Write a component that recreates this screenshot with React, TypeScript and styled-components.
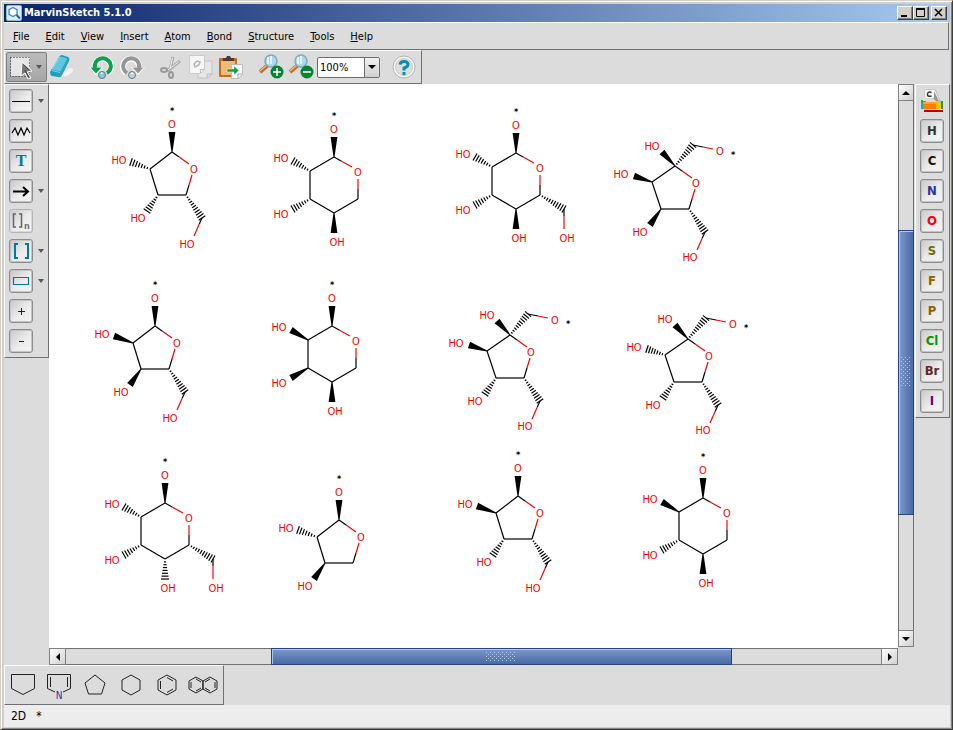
import React from "react";
import styled, { createGlobalStyle } from "styled-components";

const FONT = `"DejaVu Sans Condensed", "DejaVu Sans", "Liberation Sans", sans-serif`;

const GlobalStyle = createGlobalStyle`
  * { box-sizing: border-box; }
  body { margin: 0; background: #d4d0c8; }
  button { font: inherit; color: inherit; margin: 0; padding: 0; border: 0; background: none; }
  svg { display: block; }
`;

const Window = styled.div`
  display: flex;
  flex-direction: column;
  height: 100vh;
  padding: 3px 2px 2px 3px;
  background: #d4d0c8;
  border: 1px solid;
  border-color: #d4d0c8 #404040 #404040 #d4d0c8;
  box-shadow: inset 1px 1px #fff, inset -1px -1px #808080;
  font-family: ${FONT};
  font-size: 11px;
  color: #000;
`;

const TitleBar = styled.header`
  display: flex;
  align-items: center;
  height: 18px;
  flex: none;
  padding: 0 3px 0 2px;
  background: linear-gradient(90deg, #0a246a, #a6caf0);
`;

const Title = styled.h1`
  flex: 1;
  margin: 0 2px;
  font-size: 11px;
  font-weight: bold;
  line-height: 18px;
  color: #fff;
`;

const WindowButton = styled.button<{ $apart?: boolean }>`
  display: grid;
  place-items: center;
  width: 16px;
  height: 14px;
  margin-left: ${(p) => (p.$apart ? 2 : 0)}px;
  background: #d4d0c8;
  border: 1px solid;
  border-color: #fff #404040 #404040 #fff;
  box-shadow: inset -1px -1px #808080;
`;

const Body = styled.div`
  display: flex;
  flex-direction: column;
  flex: 1;
  min-height: 0;
  background: #dcdcdc;
`;

const MenuBar = styled.nav`
  display: flex;
  align-items: center;
  gap: 16px;
  height: 28px;
  flex: none;
  padding: 1px 8px 0;
  margin-right: 1px;
  border: 1px solid;
  border-color: #fff #707070 #707070 #dcdcdc;
`;

const MenuItem = styled.button`
  line-height: 16px;
  &::first-letter { text-decoration: underline; }
`;

const Panel = styled.div`
  border: 1px solid;
  border-color: #fff #707070 #707070 #fff;
  background: #dcdcdc;
`;

const MainTools = styled(Panel)`
  display: flex;
  align-items: center;
  align-self: flex-start;
  flex: none;
  height: 34px;
  padding: 0 2px 0 1px;
`;

const ToolButton = styled.button<{ $gap?: number }>`
  width: 30px;
  height: 30px;
  display: grid;
  place-items: center;
  margin-left: ${(p) => p.$gap ?? 0}px;
`;

const SelectTool = styled.button`
  display: flex;
  align-items: center;
  gap: 3px;
  width: 41px;
  height: 30px;
  padding-left: 2px;
  border: 1px solid #808080;
  border-radius: 2px;
  background: linear-gradient(#bcbcbc, #a6a6a6);
`;

const ZoomBox = styled.div`
  position: relative;
  width: 63px;
  height: 21px;
  margin: 0 9px 0 1px;
`;

const ZoomSelect = styled.select`
  appearance: none;
  width: 100%;
  height: 100%;
  margin: 0;
  padding: 0 2px;
  border: 1px solid #6e6e6e;
  border-radius: 2px;
  background: #fff;
  font: inherit;
  color: #000;
`;

const ZoomArrow = styled.span`
  position: absolute;
  top: 1px;
  right: 1px;
  bottom: 1px;
  width: 15px;
  display: grid;
  place-items: center;
  border-left: 1px solid #6e6e6e;
  background: linear-gradient(#f2f2f2, #d0d0d0);
  pointer-events: none;
`;

const Workspace = styled.div`
  display: flex;
  align-items: stretch;
  flex: 1;
  min-height: 0;
`;

const SideColumn = styled.aside<{ $width: number }>`
  width: ${(p) => p.$width}px;
  flex: none;
`;

const SidePanel = styled(Panel)`
  display: flex;
  flex-direction: column;
  gap: 6px;
  padding: 4px 0 4px 4px;
`;

const SideRow = styled.div`
  display: flex;
  align-items: center;
  gap: 5px;
  height: 24px;
`;

const Key = styled.button<{ $color?: string; $faded?: boolean }>`
  display: grid;
  place-items: center;
  width: 24px;
  height: 24px;
  border: 1px solid ${(p) => (p.$faded ? "#b4b4b4" : "#8c8c8c")};
  border-radius: 3px;
  background: linear-gradient(135deg, #c8c8c8, #ececec 55%, #f4f4f4);
  box-shadow: inset 0 0 0 1px ${(p) => (p.$faded ? "#dadada" : "#c4c4c4")};
  color: ${(p) => p.$color ?? "#000"};
  font-size: 13px;
  font-weight: bold;
  line-height: 16px;
`;

const Viewport = styled.main`
  display: grid;
  grid-template: minmax(0, 1fr) 17px / minmax(0, 1fr) 17px;
  flex: 1;
  min-width: 0;
`;

const Canvas = styled.div`
  background: #fff;
  overflow: hidden;
`;

const ScrollBar = styled.div<{ $vertical?: boolean }>`
  display: flex;
  flex-direction: ${(p) => (p.$vertical ? "column" : "row")};
  margin: ${(p) => (p.$vertical ? "0 1px 1px 0" : "0")};
  border: 1px solid #707070;
  background: #dcdcdc;
`;

const ScrollButton = styled.button<{ $vertical?: boolean }>`
  display: grid;
  place-items: center;
  flex: none;
  width: ${(p) => (p.$vertical ? "auto" : "15px")};
  height: ${(p) => (p.$vertical ? "15px" : "auto")};
  background: linear-gradient(135deg, #fff, #d0d0d0);
  box-shadow: 0 0 0 1px #808080;
`;

const Gap = styled.div<{ $share: number }>`
  flex: ${(p) => p.$share} 1 0;
`;

const Thumb = styled.div<{ $vertical?: boolean; $share: number }>`
  display: grid;
  place-items: center;
  flex: ${(p) => p.$share} 1 0;
  margin: ${(p) => (p.$vertical ? "0 -1px" : "-1px 0")};
  border: 1px solid #2a4480;
  box-shadow: inset 1px 1px #a6caf0;
  background: linear-gradient(${(p) => (p.$vertical ? "90deg" : "180deg")}, #7b98cc, #4a6aa5);
`;

const Grip = styled.span<{ $vertical?: boolean }>`
  width: ${(p) => (p.$vertical ? 10 : 30)}px;
  height: ${(p) => (p.$vertical ? 30 : 10)}px;
  background:
    linear-gradient(#a6c4ee, #a6c4ee) 0 0 / 1px 1px,
    conic-gradient(#a6c4ee 0 0) 0 0 / 1px 1px;
  background:
    conic-gradient(from 270deg at 1px 1px, #b0caf0 90deg, transparent 0) 0 0 / 4px 4px,
    conic-gradient(from 270deg at 1px 1px, #b0caf0 90deg, transparent 0) 2px 2px / 4px 4px;
`;

const RingTools = styled(Panel)`
  display: flex;
  align-items: center;
  align-self: flex-start;
  gap: 4px;
  flex: none;
  height: 40px;
  padding: 0 4px 0 2px;
`;

const RingButton = styled.button`
  width: 32px;
  height: 32px;
`;

const StatusBar = styled.footer`
  display: flex;
  align-items: center;
  gap: 10px;
  height: 22px;
  flex: none;
  padding: 0 7px;
  background: #ededed;
  font-size: 12px;
`;

/* ---------- molecules ---------- */

type Pt = [number, number];
type Stereo = "wedge" | "hash";
interface Sugar {
  kind: "furanose" | "pyranose" | "ketose";
  at: Pt;
  s2: Stereo;
  s3: Stereo;
  s4?: Stereo;
  tail?: boolean;
}

const SUGARS: Sugar[] = [
  { kind: "furanose", at: [123, 68], s2: "hash", s3: "hash", tail: true },
  { kind: "pyranose", at: [285, 73], s2: "hash", s3: "hash", s4: "wedge" },
  { kind: "pyranose", at: [467, 69], s2: "hash", s3: "hash", s4: "wedge", tail: true },
  { kind: "ketose", at: [626, 82], s2: "wedge", s3: "wedge", tail: true },
  { kind: "furanose", at: [106, 242], s2: "wedge", s3: "wedge", tail: true },
  { kind: "pyranose", at: [283, 242], s2: "wedge", s3: "wedge", s4: "wedge" },
  { kind: "ketose", at: [461, 251], s2: "wedge", s3: "hash", tail: true },
  { kind: "ketose", at: [639, 255], s2: "hash", s3: "hash", tail: true },
  { kind: "pyranose", at: [116, 419], s2: "hash", s3: "hash", s4: "hash", tail: true },
  { kind: "furanose", at: [290, 436], s2: "hash", s3: "wedge" },
  { kind: "furanose", at: [469, 412], s2: "wedge", s3: "hash", tail: true },
  { kind: "pyranose", at: [654, 414], s2: "wedge", s3: "hash", s4: "wedge" },
];

const RED = "#f00";

const Bond = ({ a, b, color = "#000" }: { a: Pt; b: Pt; color?: string }) => (
  <line x1={a[0]} y1={a[1]} x2={b[0]} y2={b[1]} stroke={color} strokeWidth="1.200" />
);

const HalfBond = ({ a, b, split = 0.5 }: { a: Pt; b: Pt; split?: number }) => {
  const m: Pt = [a[0] + (b[0] - a[0]) * split, a[1] + (b[1] - a[1]) * split];
  return (
    <>
      <Bond a={a} b={m} />
      <Bond a={m} b={b} color={RED} />
    </>
  );
};

const StereoBond = ({ a, b, type }: { a: Pt; b: Pt; type: Stereo }) => {
  const dx = b[0] - a[0];
  const dy = b[1] - a[1];
  const len = Math.hypot(dx, dy);
  const nx = -dy / len;
  const ny = dx / len;
  if (type === "wedge") {
    const tip = 0.5;
    const w = 3.4;
    const corners: Pt[] = [
      [a[0] + nx * tip, a[1] + ny * tip],
      [b[0] + nx * w, b[1] + ny * w],
      [b[0] - nx * w, b[1] - ny * w],
      [a[0] - nx * tip, a[1] - ny * tip],
    ];
    return <polygon points={corners.map((c) => c.join(",")).join(" ")} />;
  }
  const count = Math.round(len / 2.8);
  return (
    <>
      {Array.from({ length: count }, (_, i) => {
        const t = (i + 1) / count;
        const w = 0.6 + 3.4 * t;
        const x = a[0] + dx * t;
        const y = a[1] + dy * t;
        return <Bond key={i} a={[x - nx * w, y - ny * w]} b={[x + nx * w, y + ny * w]} />;
      })}
    </>
  );
};

const Atom = ({ at, children }: { at: Pt; children: string }) => (
  <text x={at[0]} y={at[1] + 4} fill={RED} textAnchor="middle">
    {children}
  </text>
);

const StarText = styled.text`
  font: bold 9px ${FONT};
`;

const Star = ({ at }: { at: Pt }) => (
  <StarText x={at[0]} y={at[1] + 5} textAnchor="middle">
    *
  </StarText>
);

const Molecule = ({ kind, at, s2, s3, s4, tail }: Sugar) => {
  const c1: Pt = [0, 0];
  const six = kind === "pyranose";
  const ketose = kind === "ketose";
  const c2: Pt = six ? [-24, 14] : ketose ? [-23, 16] : [-22, 17];
  const c3: Pt = six ? [-24, 42] : [-14, 43];
  const c4: Pt = six ? [0, 56] : [14, 43];
  return (
    <g transform={`translate(${at[0]} ${at[1]})`}>
      <Bond a={c1} b={c2} />
      <Bond a={c2} b={c3} />
      <Bond a={c3} b={c4} />
      <HalfBond a={c1} b={six ? [18, 10] : [17, 12]} split={0.42} />
      {ketose ? (
        <>
          <StereoBond a={c1} b={[-13, -14]} type="wedge" />
          <Atom at={[-23, -20]}>HO</Atom>
          <StereoBond a={c1} b={[18, -21]} type="hash" />
          <HalfBond a={[18, -21]} b={[38, -17]} />
          <Atom at={[45, -15]}>O</Atom>
          <Star at={[58, -13]} />
        </>
      ) : (
        <>
          <StereoBond a={c1} b={[0, -20]} type="wedge" />
          <Atom at={[0, -28]}>O</Atom>
          <Star at={[0, -43]} />
        </>
      )}
      {six ? (
        <>
          <Bond a={c4} b={[24, 42]} />
          <HalfBond a={[24, 42]} b={[24, 22]} />
          <Atom at={[24, 15]}>O</Atom>
          <StereoBond a={c2} b={[-41, 4]} type={s2} />
          <Atom at={[-53, 1]}>HO</Atom>
          <StereoBond a={c3} b={[-41, 52]} type={s3} />
          <Atom at={[-53, 57]}>HO</Atom>
          {s4 && <StereoBond a={c4} b={[0, 76]} type={s4} />}
          <Atom at={[3, 85]}>OH</Atom>
          {tail && (
            <>
              <StereoBond a={[24, 42]} b={[48, 56]} type="hash" />
              <HalfBond a={[48, 56]} b={[48, 76]} split={0.35} />
              <Atom at={[51, 85]}>OH</Atom>
            </>
          )}
        </>
      ) : (
        <>
          <HalfBond a={c4} b={[20, 23]} />
          <Atom at={ketose ? [21, 17] : [22, 17]}>O</Atom>
          <StereoBond a={c2} b={[-41, 10]} type={s2} />
          <Atom at={ketose ? [-54, 8] : [-53, 8]}>HO</Atom>
          <StereoBond a={c3} b={[-25, 59]} type={s3} />
          <Atom at={ketose ? [-35, 66] : [-34, 66]}>HO</Atom>
          {tail && (
            <>
              <StereoBond a={c4} b={[30, 66]} type="hash" />
              <HalfBond a={[30, 66]} b={[22, 84]} split={0.35} />
              <Atom at={ketose ? [15, 91] : [15, 92]}>HO</Atom>
            </>
          )}
        </>
      )}
    </g>
  );
};

/* ---------- icons ---------- */

const Icon = ({ size = 24, children }: { size?: number; children: React.ReactNode }) => (
  <svg width={size} height={size} viewBox={`0 0 ${size} ${size}`} fill="none" aria-hidden="true">
    {children}
  </svg>
);

const Triangle = ({ d, color = "#000", w = 9, h = 5 }: { d: string; color?: string; w?: number; h?: number }) => (
  <svg width={w} height={h} viewBox={`0 0 ${w} ${h}`} fill={color} aria-hidden="true">
    <path d={d} />
  </svg>
);

const DropMark = () => <Triangle d="M0 0h6l-3 4z" color="#4a5a68" w={6} h={4} />;

const AppIcon = () => (
  <Icon size={16}>
    <rect width="16" height="16" rx="2" fill="#8fbdd2" />
    <rect x="1" y="1" width="14" height="14" rx="1" fill="#d8ecf4" />
    <path d="M7 2.500l4 2.200v4.600l-4 2.200-4-2.200V4.700z" fill="#fff" stroke="#4a88a8" strokeWidth="1.300" />
    <path d="M10.500 10l3.500 3.500" stroke="#2d6484" strokeWidth="2" />
  </Icon>
);

const PointerIcon = () => (
  <Icon>
    <path d="M2 2h19v13l-6-6v10l-2 2H2z" fill="#e6e6e6" />
    <rect x="1.500" y="2.500" width="19" height="19" stroke="#222" strokeDasharray="1 2" />
    <path d="M13 7l10 9-5 1 4 6-3 1-3-6-4 3z" fill="#777" stroke="#fff" />
    <path d="M14.500 9.500l5 5M16 15l3.500 7" stroke="#444" />
  </Icon>
);

const EraserIcon = () => (
  <Icon size={26}>
    <path d="M11 23l9-9q5 0 4 3-3 5-11 6z" fill="#f2f2f2" />
    <path d="M10 3q1-2 3-2l6 2q2 1 1 4l-7 14q-1 3-4 2l-6-1q-2-1-2-4z" fill="#1f9dbf" />
    <path d="M11.500 2.500l7 2-6.500 13-9-2z" fill="#62c6de" />
    <path d="M18.500 4.500l-7 13-1.500 5q2 0 3-2l6.500-13z" fill="#2aa5c6" />
    <path d="M11 3L3 15" stroke="#a6e2ef" />
    <path d="M3 16.500l8 2" stroke="#8bd6e8" />
  </Icon>
);

const TurnIcon = ({ color, ball, flip }: { color: string; ball: string; flip?: boolean }) => (
  <Icon size={26}>
    <g transform={flip ? "matrix(-1 0 0 1 26 0)" : undefined}>
      <path d="M6 12a8 8 0 1 1 13 7" stroke="#fff" strokeWidth="6" />
      <path d="M0 13h14l-7 8z" fill="#fff" />
      <path d="M6 14a8 8 0 1 1 12 5" stroke={color} strokeWidth="4" />
      <path d="M1.500 13.500h11l-5.500 6z" fill={color} />
      <circle cx="13" cy="21" r="3.500" fill={ball} stroke="#5d7c88" />
      <path d="M12 19.500l1.500-.5" stroke="#fff" strokeWidth="1.500" />
    </g>
  </Icon>
);

const CutIcon = () => (
  <Icon>
    <path d="M14 2l-3 13M21 6L8 16" stroke="#aaa" strokeWidth="3" />
    <path d="M13.500 3l-2.500 11M20 6.500L9 15" stroke="#efefef" />
    <ellipse cx="5" cy="15" rx="3" ry="2" stroke="#999" strokeWidth="2" />
    <ellipse cx="12" cy="20" rx="2" ry="3" stroke="#999" strokeWidth="2" />
  </Icon>
);

const CopyIcon = () => (
  <Icon>
    <path d="M9 6h14v13l-5 4H9z" fill="#e6e6e6" stroke="#c4c4c4" />
    <path d="M.5.5h15v14l-4 4H.5z" fill="#f6f6f6" stroke="#ccc" />
    <path d="M5 9l3-3 3 1-1 3-4 2z" stroke="#b4b4b4" strokeWidth="1.500" />
    <path d="M11.500 18v-3.500h4M18 23v-4h5" stroke="#bdbdbd" />
  </Icon>
);

const PasteIcon = () => (
  <Icon>
    <rect x="0" y="3" width="18" height="19" rx="1" fill="#bd6d25" />
    <rect x="2" y="6" width="14" height="14" fill="#f1ba75" />
    <path d="M4 3h3l1-2h3l1 2h3v3H4z" fill="#4a3a30" />
    <path d="M12.500 9.500h11v10l-4 4h-7z" fill="#fafafa" stroke="#bbb" />
    <path d="M19 23v-4h4" stroke="#aaa" />
    <path d="M8 14h7v-3l5 4.500-5 4.500v-3H8z" fill="#08a542" stroke="#fff" strokeWidth=".5" />
  </Icon>
);

const LensIcon = ({ plus }: { plus?: boolean }) => (
  <Icon size={26}>
    <path d="M2 18l8-7" stroke="#b66c2c" strokeWidth="4" />
    <path d="M2 17l7-6" stroke="#f0b878" strokeWidth="1.500" />
    <circle cx="13" cy="7" r="6" fill="#a4dced" stroke="#8ba7b2" strokeWidth="1.500" />
    <path d="M10 3v7M13 2v8" stroke="#e2f7fc" strokeWidth="2" />
    <circle cx="19" cy="18" r="6.500" fill="#078338" />
    <path d={plus ? "M15 18h8M19 14v8" : "M15 18h8"} stroke="#fff" strokeWidth="1.500" />
  </Icon>
);

const HelpIcon = () => (
  <Icon>
    <circle cx="12" cy="12" r="11" fill="#f6f6f6" stroke="#b4b4b4" />
    <circle cx="12" cy="12" r="8.500" fill="#dedede" stroke="#ccc" />
    <path d="M8 9.500Q8.500 6.500 12 6.500t4 2.500-4 4v2.500" stroke="#078eb2" strokeWidth="3" />
    <rect x="10.500" y="17" width="3" height="3" fill="#078eb2" />
  </Icon>
);

const TableIcon = () => (
  <Icon>
    <rect x="1" y="12" width="5" height="8" fill="#18a8d8" />
    <rect x="1" y="11" width="2" height="3" fill="#10b050" />
    <rect x="3" y="13" width="13" height="7" fill="#ff7c00" />
    <rect x="3" y="13" width="13" height="2" fill="#ffa030" />
    <rect x="16" y="12" width="5" height="8" fill="#f4c400" />
    <rect x="21" y="12" width="2" height="8" fill="#00a850" />
    <rect x="4" y="21" width="19" height="2" fill="#c00000" />
    <path d="M5 1l10-1 5 12-3 1-3-4-9-1z" fill="#f5f5f5" stroke="#aaa" strokeWidth=".7" />
    <path d="M14 2l5 10-3 0-4-4z" fill="#999" />
    <path d="M5 1h9v8H5z" fill="#f7f7f7" />
    <path d="M11.500 3.500Q8 2 7.500 5t4 2" stroke="#333" strokeWidth="1.500" />
  </Icon>
);

const toolIcons = {
  bond: <path d="M2 11.500h18" stroke="#000" />,
  chain: <path d="M2 13l3-5 3 7 3-7 3 7 3-7 3 5" stroke="#000" strokeWidth="1.200" />,
  arrow: <path d="M3 11.500h15M13 7l5 4.500-5 4.500" stroke="#000" strokeWidth="2" />,
  brackets: <path d="M8 4H5v14h3M15 4h3v14h-3" stroke="#00799a" strokeWidth="2" />,
  rect: <path d="M3.500 7.500h15v7h-15z" stroke="#00799a" strokeWidth="1.200" />,
  plus: <path d="M8 11.500h7M11.500 8v7" stroke="#222" />,
  minus: <path d="M9 11.500h5" stroke="#222" />,
};

const LetterText = styled.text`
  font: bold 16px "Liberation Serif", serif;
`;

const SmallText = styled.text`
  font: bold 9px ${FONT};
`;

const NitrogenText = styled.text`
  font: 10px ${FONT};
`;

const SIDE_TOOLS: { name: string; drawing: React.ReactNode; drop?: boolean; faded?: boolean }[] = [
  { name: "Bond", drawing: toolIcons.bond, drop: true },
  { name: "Chain", drawing: toolIcons.chain },
  {
    name: "Text",
    drawing: <LetterText x="11" y="16" textAnchor="middle" fill="#00799a">T</LetterText>,
  },
  { name: "Arrow", drawing: toolIcons.arrow, drop: true },
  {
    name: "Repeating group",
    faded: true,
    drawing: (
      <>
        <path d="M6 4H3.500v13H6M9 4h2.500v13H9" stroke="#666" strokeWidth="1.500" />
        <SmallText x="14" y="19" fill="#777">n</SmallText>
      </>
    ),
  },
  { name: "Brackets", drawing: toolIcons.brackets, drop: true },
  { name: "Rectangle", drawing: toolIcons.rect, drop: true },
  { name: "Increase charge", drawing: toolIcons.plus },
  { name: "Decrease charge", drawing: toolIcons.minus },
];

const ELEMENTS: [string, string][] = [
  ["H", "#333"], ["C", "#111"], ["N", "#30309a"], ["O", "#f00"], ["S", "#6b6b00"],
  ["F", "#966000"], ["P", "#966000"], ["Cl", "#009a00"], ["Br", "#5c2a2a"], ["I", "#600090"],
];

const hexagon = (x: number, r: number) => {
  const w = Math.round(r * 0.87);
  const h = r / 2;
  return `M${x} ${16 - r}l${w} ${h}v${r}l${-w} ${h}l${-w} ${-h}v${-r}z`;
};

const RINGS: { name: string; drawing: React.ReactNode }[] = [
  { name: "Cyclopentane, flat", drawing: <path d="M4.500 5.500h23v14L16 25.500l-11.500-6z" /> },
  {
    name: "Pyrrole",
    drawing: (
      <>
        <path d="M12 23l-7.500-3.500v-14h23v14L20 23M7.500 8v10M24.500 8v10" />
        <NitrogenText x="16" y="30" textAnchor="middle" fill="#2c2caa" stroke="none">N</NitrogenText>
      </>
    ),
  },
  { name: "Cyclopentane", drawing: <path d="M16 6l10 8-3.500 11h-13L6 14z" /> },
  { name: "Cyclohexane", drawing: <path d={hexagon(16, 10)} /> },
  {
    name: "Benzene",
    drawing: <path d={`${hexagon(16, 10)}M9.500 12v8M16 8.500l6 3.500M16 23.500l6-3.500`} />,
  },
  {
    name: "Naphthalene",
    drawing: (
      <path d={`${hexagon(9, 8)}${hexagon(23, 8)}M4 13v6M9 10l5 3M9 22l5-3M28 13v6M23 10l-5 3M23 22l-5-3`} />
    ),
  },
];

const MENUS = ["File", "Edit", "View", "Insert", "Atom", "Bond", "Structure", "Tools", "Help"];

export default function App() {
  return (
    <Window>
      <GlobalStyle />
      <TitleBar>
        <AppIcon />
        <Title>MarvinSketch 5.1.0</Title>
        <WindowButton aria-label="Minimize">
          <Icon size={10}><path d="M1 8h6" stroke="#000" strokeWidth="2" /></Icon>
        </WindowButton>
        <WindowButton aria-label="Maximize">
          <Icon size={10}><path d="M.5 1v7.500h8V1" stroke="#000" /><path d="M0 1h9" stroke="#000" strokeWidth="2" /></Icon>
        </WindowButton>
        <WindowButton aria-label="Close" $apart>
          <Icon size={10}><path d="M1 1l7 7M8 1L1 8" stroke="#000" strokeWidth="1.500" /></Icon>
        </WindowButton>
      </TitleBar>
      <Body>
        <MenuBar>
          {MENUS.map((m) => <MenuItem key={m}>{m}</MenuItem>)}
        </MenuBar>
        <MainTools>
          <SelectTool aria-label="Select"><PointerIcon /><DropMark /></SelectTool>
          <ToolButton aria-label="Erase"><EraserIcon /></ToolButton>
          <ToolButton aria-label="Undo" $gap={10}><TurnIcon color="#0ba04b" ball="#8fc6d8" /></ToolButton>
          <ToolButton aria-label="Redo"><TurnIcon color="#969696" ball="#c8d0d2" flip /></ToolButton>
          <ToolButton aria-label="Cut" $gap={9}><CutIcon /></ToolButton>
          <ToolButton aria-label="Copy"><CopyIcon /></ToolButton>
          <ToolButton aria-label="Paste"><PasteIcon /></ToolButton>
          <ToolButton aria-label="Zoom in" $gap={10}><LensIcon plus /></ToolButton>
          <ToolButton aria-label="Zoom out"><LensIcon /></ToolButton>
          <ZoomBox>
            <ZoomSelect aria-label="Zoom" defaultValue="100%"><option>100%</option><option>200%</option></ZoomSelect>
            <ZoomArrow><Triangle d="M0 0h8l-4 4z" w={8} h={4} /></ZoomArrow>
          </ZoomBox>
          <ToolButton aria-label="Help"><HelpIcon /></ToolButton>
        </MainTools>
        <Workspace>
          <SideColumn $width={45}>
            <SidePanel>
              {SIDE_TOOLS.map((t) => (
                <SideRow key={t.name}>
                  <Key aria-label={t.name} $faded={t.faded}><Icon size={22}>{t.drawing}</Icon></Key>
                  {t.drop && <DropMark />}
                </SideRow>
              ))}
            </SidePanel>
          </SideColumn>
          <Viewport>
            <Canvas>
              <svg width="849" height="564" fontSize="11" fontFamily="DejaVu Sans Condensed, Liberation Sans, sans-serif">
                {SUGARS.map((s, i) => <Molecule key={i} {...s} />)}
              </svg>
            </Canvas>
            <ScrollBar $vertical>
              <ScrollButton $vertical aria-label="Scroll up"><Triangle d="M0 4h8l-4-4z" w={8} h={4} /></ScrollButton>
              <Gap $share={131} />
              <Thumb $vertical $share={284}><Grip $vertical /></Thumb>
              <Gap $share={117} />
              <ScrollButton $vertical aria-label="Scroll down"><Triangle d="M0 0h8l-4 4z" w={8} h={4} /></ScrollButton>
            </ScrollBar>
            <ScrollBar>
              <ScrollButton aria-label="Scroll left"><Triangle d="M4 0v8l-4-4z" w={4} h={8} /></ScrollButton>
              <Gap $share={206} />
              <Thumb $share={460}><Grip /></Thumb>
              <Gap $share={150} />
              <ScrollButton aria-label="Scroll right"><Triangle d="M0 0v8l4-4z" w={4} h={8} /></ScrollButton>
            </ScrollBar>
          </Viewport>
          <SideColumn $width={35}>
            <SidePanel>
              <SideRow as="button" aria-label="Periodic table"><TableIcon /></SideRow>
              {ELEMENTS.map(([symbol, color]) => <Key key={symbol} $color={color}>{symbol}</Key>)}
            </SidePanel>
          </SideColumn>
        </Workspace>
        <RingTools>
          {RINGS.map((r) => (
            <RingButton key={r.name} aria-label={r.name}>
              <Icon size={32}><g stroke="#222">{r.drawing}</g></Icon>
            </RingButton>
          ))}
        </RingTools>
        <StatusBar><span>2D</span><span>*</span></StatusBar>
      </Body>
    </Window>
  );
}
